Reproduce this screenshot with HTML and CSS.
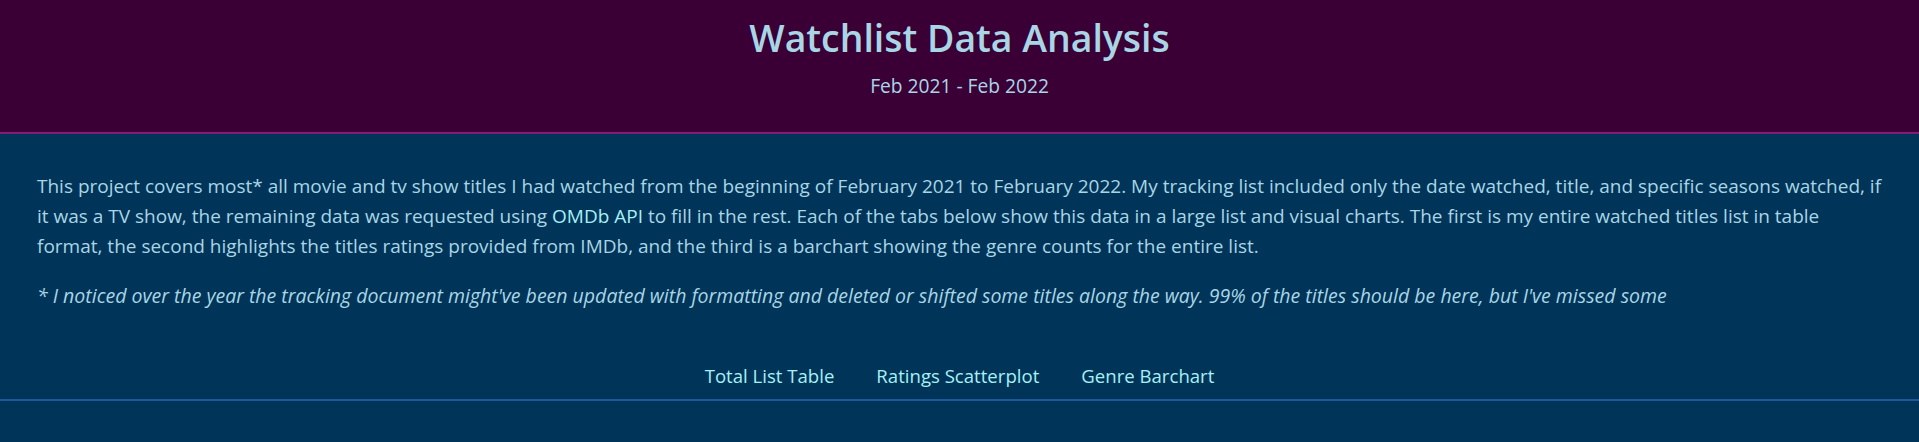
FILE: index.html
```html
<!DOCTYPE html>
<html lang="en">
<head>
<meta charset="utf-8">
<title>Watchlist Data Analysis</title>
<link rel="stylesheet" href="styles.css">
</head>
<body>
<header class="site-header">
  <h1 class="title">Watchlist Data Analysis</h1>
  <p class="subtitle">Feb 2021 - Feb 2022</p>
</header>
<main class="content">
  <section class="intro">
    <p class="intro-text">This project covers most* all movie and tv show titles I had watched from the beginning of February 2021 to February 2022. My tracking list included only the date watched, title, and specific seasons watched, if it was a TV show, the remaining data was requested using <a class="link" href="#">OMDb API</a> to fill in the rest. Each of the tabs below show this data in a large list and visual charts. The first is my entire watched titles list in table format, the second highlights the titles ratings provided from IMDb, and the third is a barchart showing the genre counts for the entire list.</p>
    <p class="intro-note">* I noticed over the year the tracking document might've been updated with formatting and deleted or shifted some titles along the way. 99% of the titles should be here, but I've missed some</p>
  </section>
  <nav class="tabs">
    <a class="tab" href="#">Total List Table</a>
    <a class="tab" href="#">Ratings Scatterplot</a>
    <a class="tab" href="#">Genre Barchart</a>
  </nav>
</main>
</body>
</html>
```
FILE: styles.css
```css
html, body {
  margin: 0;
  padding: 0;
}
body {
  background: #003459;
  color: #a9d6e5;
  font-family: "Open Sans", "Noto Sans", "DejaVu Sans", sans-serif;
  min-height: 442px;
}
.site-header {
  background: #3a0036;
  border-bottom: 2px solid #861b78;
  text-align: center;
  padding: 14px 0 34px;
}
.title {
  margin: 0;
  font-size: 37.4px;
  line-height: 48px;
  font-weight: 600;
  color: #a9d6e5;
}
.subtitle {
  margin: 12px 0 0;
  font-size: 19.2px;
  line-height: 24px;
  color: #a9d6e5;
}
.content {
  padding: 37px 37px 0;
}
.intro-text, .intro-note {
  margin: 0;
  font-size: 19px;
  line-height: 30px;
}
.intro-note {
  margin-top: 20px;
  font-style: italic;
  font-size: 19.5px;
}
.link {
  color: #a6f1f5;
  text-decoration: none;
}
.tabs {
  display: flex;
  justify-content: center;
  gap: 42px;
  margin: 50px -37px 0;
  padding-bottom: 8px;
  border-bottom: 2px solid #1c5a9c;
}
.tab {
  color: #a6f1f5;
  text-decoration: none;
  font-size: 18.6px;
  line-height: 30px;
}
```
